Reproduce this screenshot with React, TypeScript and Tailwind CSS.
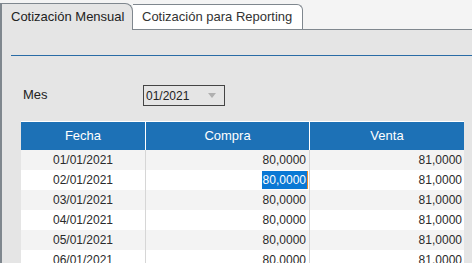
import React from "react";

const rows = ["01/01/2021", "02/01/2021", "03/01/2021", "04/01/2021", "05/01/2021", "06/01/2021"];

export default function App() {
    return (
        <div className="w-[472px] h-[263px] overflow-hidden bg-[#f4f4f4] flex flex-col font-['Liberation_Sans',sans-serif]">
            {/* tabs */}
            <div className="h-[30px] flex items-end border-b border-[#7f878e] shrink-0">
                <div className="w-[133px] h-[27px] -mb-px bg-[#e5e5e5] border-l-2 border-t border-r border-[#7f878e] rounded-tr-[8px] flex items-center pl-[9px] text-[13px] text-[#222]">
                    Cotización Mensual
                </div>
                <div className="w-[170px] h-[25px] bg-white border-t border-r border-[#7f878e] rounded-tr-[6px] flex items-center pl-[9px] text-[13px] text-[#333]">
                    Cotización para Reporting
                </div>
            </div>

            {/* panel */}
            <div className="flex-1 bg-[#e5e5e5] border-l-2 border-[#7f878e] flex flex-col">
                <div className="ml-[9px] mt-[25px] h-px bg-[#2a6ca6]" />
                <div className="flex items-center mt-[29px] h-[21px]">
                    <span className="ml-[21px] w-[120px] text-[13px] text-[#222] -mt-[2px]">Mes</span>
                    <div className="w-[82px] h-[21px] border border-[#444] flex items-center justify-between pl-[2px] pr-[8px] text-[12px] text-[#222]">
                        <span>01/2021</span>
                        <svg width="8" height="5" viewBox="0 0 8 5">
                            <path d="M0 0 L8 0 L4 5 Z" fill="#b0b0b0" />
                        </svg>
                    </div>
                </div>
                <div className="ml-[19px] mt-[15px] w-[443px] border-t border-white text-[12px]">
                    <div className="grid grid-cols-[125px_164px_154px] h-[28px] bg-[#1d71b6] text-white text-[13px]">
                        <div className="flex items-center justify-center border-r border-white">Fecha</div>
                        <div className="flex items-center justify-center border-r border-white">Compra</div>
                        <div className="flex items-center justify-center">Venta</div>
                    </div>
                    {rows.map((d, i) => (
                        <div
                            key={d}
                            className={`grid grid-cols-[125px_164px_154px] h-[20px] text-[#2a2a2a] ${i % 2 === 0 ? "bg-[#f3f3f3]" : "bg-white"}`}
                        >
                            <div className="flex items-center justify-center border-r border-[#d6d6d6]">{d}</div>
                            <div className="flex items-center justify-end border-r border-[#d6d6d6] pr-px">
                                {i === 1 ? (
                                    <span className="bg-[#0a78d4] text-white h-[18px] flex items-center px-px border-r border-[#f08a24]">80,0000</span>
                                ) : (
                                    <span className="pr-[2px]">80,0000</span>
                                )}
                            </div>
                            <div className="flex items-center justify-end pr-[2px]">81,0000</div>
                        </div>
                    ))}
                </div>
            </div>
        </div>
    );
}
